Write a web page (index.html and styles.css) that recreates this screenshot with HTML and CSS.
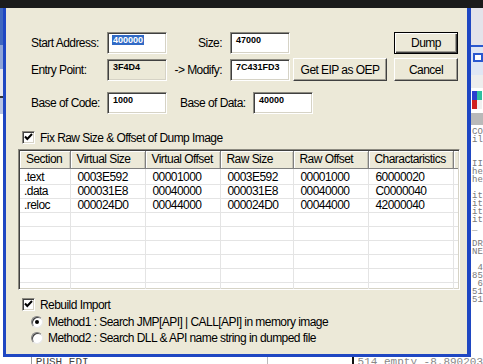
FILE: index.html
```html
<!DOCTYPE html>
<html>
<head>
<meta charset="utf-8">
<link rel="stylesheet" href="styles.css">
</head>
<body>
<div class="screen">
  <div class="topbar"></div>
  <div class="stage">
    <div class="left-strip">
      <div class="ls-a"></div>
      <div class="ls-b"></div>
      <div class="ls-c"></div>
      <div class="ls-d"></div>
      <div class="ls-e"></div>
    </div>
    <div class="dialog">
      <div class="row row1">
        <span class="lbl">Start Address:</span>
        <span class="field"><span class="sel">400000</span></span>
        <span class="lbl2">Size:</span>
        <span class="field">47000</span>
        <span class="btn btn-default btn-dump">Dump</span>
      </div>
      <div class="row row2">
        <span class="lbl">Entry Point:</span>
        <span class="field field-ro">3F4D4</span>
        <span class="lbl2">-&gt; Modify:</span>
        <span class="field">7C431FD3</span>
        <span class="btn btn-eip">Get EIP as OEP</span>
        <span class="btn btn-cancel">Cancel</span>
      </div>
      <div class="row row3">
        <span class="lbl">Base of Code:</span>
        <span class="field">1000</span>
        <span class="lbl3">Base of Data:</span>
        <span class="field">40000</span>
      </div>
      <div class="check-row fix-row">
        <span class="chk"><svg width="9" height="9" viewBox="0 0 9 9"><path d="M1 3.5 L3.3 6 L8 1" stroke="#000" stroke-width="2" fill="none"/></svg></span>
        <span class="chk-label">Fix Raw Size &amp; Offset of Dump Image</span>
      </div>
      <div class="list">
        <table>
          <colgroup>
            <col class="c-sec"><col class="c-vs"><col class="c-vo"><col class="c-rs"><col class="c-ro"><col class="c-ch"><col class="c-fill">
          </colgroup>
          <thead>
            <tr><th>Section</th><th>Virtual Size</th><th>Virtual Offset</th><th>Raw Size</th><th>Raw Offset</th><th>Charactaristics</th><th class="th-fill"></th></tr>
          </thead>
          <tbody>
            <tr><td>.text</td><td>0003E592</td><td>00001000</td><td>0003E592</td><td>00001000</td><td>60000020</td><td class="td-fill"></td></tr>
            <tr><td>.data</td><td>000031E8</td><td>00040000</td><td>000031E8</td><td>00040000</td><td>C0000040</td><td class="td-fill"></td></tr>
            <tr><td>.reloc</td><td>000024D0</td><td>00044000</td><td>000024D0</td><td>00044000</td><td>42000040</td><td class="td-fill"></td></tr>
            <tr><td></td><td></td><td></td><td></td><td></td><td></td><td class="td-fill"></td></tr>
            <tr><td></td><td></td><td></td><td></td><td></td><td></td><td class="td-fill"></td></tr>
            <tr><td></td><td></td><td></td><td></td><td></td><td></td><td class="td-fill"></td></tr>
            <tr><td></td><td></td><td></td><td></td><td></td><td></td><td class="td-fill"></td></tr>
            <tr><td></td><td></td><td></td><td></td><td></td><td></td><td class="td-fill"></td></tr>
            <tr><td></td><td></td><td></td><td></td><td></td><td></td><td class="td-fill"></td></tr>
          </tbody>
        </table>
      </div>
      <div class="check-row rebuild-row">
        <span class="chk"><svg width="9" height="9" viewBox="0 0 9 9"><path d="M1 3.5 L3.3 6 L8 1" stroke="#000" stroke-width="2" fill="none"/></svg></span>
        <span class="chk-label">Rebuild Import</span>
      </div>
      <div class="radio-row radio1">
        <span class="radio on"><span class="dot"></span></span>
        <span class="chk-label">Method1 : Search JMP[API] | CALL[API] in memory image</span>
      </div>
      <div class="radio-row radio2">
        <span class="radio"></span>
        <span class="chk-label">Method2 : Search DLL &amp; API name string in dumped file</span>
      </div>
    </div>
    <div class="right-strip">
      <div class="rs-a"></div>
      <div class="rs-b"><span class="rs-box"></span></div>
      <div class="rs-c"></div>
      <div class="rs-d"><span class="ic1"></span><span class="ic2"></span></div>
      <div class="rs-e"></div>
      <pre class="rs-text">CO
il


II
he
he

it
it
it
it
_

DR
NE

 4
85
 6
51
51</pre>
    </div>
  </div>
  <div class="below">
    <span class="bl-a"></span>
    <span class="bl-b">PUSH EDI</span>
    <span class="bl-c"></span>
    <span class="bl-d">514 empty -8.890203</span>
  </div>
</div>
</body>
</html>
```

FILE: styles.css
```css
* { box-sizing: border-box; }
html, body { margin: 0; padding: 0; }
body {
  width: 483px;
  height: 364px;
  overflow: hidden;
  background: #fff;
  font-family: "Liberation Sans", Arial, sans-serif;
  font-size: 12px;
  letter-spacing: -0.55px;
  color: #000;
}
.screen {
  width: 483px;
  height: 364px;
  display: flex;
  flex-direction: column;
  overflow: hidden;
}
.topbar { height: 8px; flex: none; background: #1b1b1b; }
.stage { display: flex; height: 349px; flex: none; }

/* left strip (background window) */
.left-strip { width: 3px; flex: none; display: flex; flex-direction: column; }
.ls-a { height: 37px; background: #3f67c0; }
.ls-b { height: 24px; background: #8ea4d8; }
.ls-c { height: 29px; background: #e6e6ee; border-bottom: 2px solid #333; }
.ls-d { height: 16px; background: #b8c4e4; }
.ls-e { flex: 1; background: #fff; }

/* dialog */
.dialog {
  width: 468px;
  flex: none;
  background: #ece9d8;
  border-left: 3px solid #1f47c2;
  border-right: 4px solid #1f47c2;
  border-bottom: 3px solid #1f47c2;
  padding-top: 24px;
  display: flex;
  flex-direction: column;
}
.row { display: flex; align-items: center; }
.row1 { height: 22px; }
.row2 { height: 23px; margin-top: 4px; }
.row3 { height: 22px; margin-top: 11px; }
.lbl { width: 101px; padding-left: 25px; white-space: nowrap; }
.lbl2 { width: 63px; text-align: right; padding-right: 8px; white-space: nowrap; }
.lbl3 { width: 73px; margin-left: 13px; white-space: nowrap; }
.field {
  width: 60px;
  height: 22px;
  background: #fff;
  border-style: solid;
  border-width: 1px;
  border-color: #8c8a80 #fff #fff #8c8a80;
  box-shadow: inset 1px 1px 0 #404040, inset -1px -1px 0 #d6d3c6;
  font-size: 9px;
  font-weight: bold;
  letter-spacing: 0;
  line-height: 10px;
  padding: 2px 0 0 5px;
  align-self: center;
}
.row2 .field { height: 22px; }
.field-ro { background: #ece9d8; }
.sel { background: #316ac5; color: #fff; padding: 0 1px; margin-left: -1px; }
.btn {
  height: 23px;
  display: flex;
  align-items: center;
  justify-content: center;
  background: #ece9d8;
  border-style: solid;
  border-width: 1px;
  border-color: #fff #404040 #404040 #fff;
  box-shadow: inset -1px -1px 0 #a09e94;
  white-space: nowrap;
}
.btn-dump { width: 64px; height: 22px; margin-left: 104px; border: 1px solid #000; box-shadow: inset 1px 1px 0 #fff, inset -1px -1px 0 #404040, inset -2px -2px 0 #a09e94; }
.btn-eip { width: 94px; margin-left: 3px; }
.btn-cancel { width: 64px; margin-left: 7px; }

/* checkboxes / radios */
.check-row, .radio-row { display: flex; align-items: center; white-space: nowrap; }
.fix-row { margin-top: 17px; height: 13px; padding-left: 16px; }
.rebuild-row { margin-top: 8px; height: 13px; padding-left: 16px; }
.chk {
  width: 13px;
  height: 13px;
  background: #fff;
  border-style: solid;
  border-width: 1px;
  border-color: #8c8a80 #fff #fff #8c8a80;
  box-shadow: inset 1px 1px 0 #404040, inset -1px -1px 0 #d6d3c6;
  display: flex;
  align-items: center;
  justify-content: center;
  flex: none;
}
.chk svg { display: block; }
.chk-label { margin-left: 5px; }
.radio-row { height: 12px; padding-left: 25px; }
.radio1 { margin-top: 5px; }
.radio2 { margin-top: 4px; }
.radio {
  width: 12px;
  height: 12px;
  border-radius: 50%;
  background: #fff;
  border: 1px solid;
  border-color: #808080 #e8e8e8 #e8e8e8 #808080;
  box-shadow: inset 1px 1px 0 #404040;
  display: flex;
  align-items: center;
  justify-content: center;
  flex: none;
}
.radio .dot { width: 4px; height: 4px; border-radius: 50%; background: #000; }

/* list view */
.list {
  margin-top: 5px;
  margin-left: 12px;
  width: 442px;
  height: 141px;
  background: #fff;
  border-style: solid;
  border-width: 1px;
  border-color: #8c8a80 #fff #fff #8c8a80;
  box-shadow: inset 1px 1px 0 #404040, inset -1px -1px 0 #d6d3c6;
  padding: 1px;
  overflow: hidden;
}
.list table { border-collapse: collapse; table-layout: fixed; width: 438px; }
.c-sec { width: 50px; }
.c-vs { width: 75px; }
.c-vo { width: 75px; }
.c-rs { width: 73px; }
.c-ro { width: 75px; }
.c-ch { width: 85px; }
.c-fill { width: 5px; }
.list th {
  height: 17px;
  padding: 0 0 0 6px;
  text-align: left;
  font-weight: normal;
  background: #ece9d8;
  border-right: 1px solid #808080;
  border-bottom: 1px solid #808080;
  box-shadow: inset 1px 1px 0 #fff, inset -1px 0 0 #c8c5b8;
  white-space: nowrap;
  overflow: hidden;
}
.list th.th-fill { border-right: none; box-shadow: inset 1px 1px 0 #fff; }
.list td {
  height: 14px;
  line-height: 13px;
  padding: 0 0 0 7px;
  border-right: 1px solid #e4e4e4;
  border-bottom: 1px solid #e4e4e4;
  white-space: nowrap;
  overflow: hidden;
}
.list td:first-child { padding-left: 4px; }
.list td.td-fill { border-right: none; }
.list tbody tr:first-child td { padding-top: 2px; height: 16px; }

/* right strip */
.right-strip { width: 12px; flex: none; display: flex; flex-direction: column; overflow: hidden; }
.rs-a { height: 37px; background: #e3e3ea; }
.rs-b { height: 30px; background: #dfe6f4; border-top: 2px solid #2a58cf; padding: 6px 0 0 2px; }
.rs-box { display: block; width: 10px; height: 9px; border: 2px solid #2a58cf; background: #fff; }
.rs-c { height: 13px; background: #ededed; }
.rs-d { height: 25px; background: #fff; display: flex; flex-direction: column; padding: 3px 0 0 1px; }
.ic1 { display: block; width: 10px; height: 9px; background: linear-gradient(90deg, #2a3fd0 50%, #2fc0a0 50%); }
.ic2 { display: block; width: 10px; height: 9px; background: linear-gradient(90deg, #d02020 50%, #f0f0f0 50%); }
.rs-e { height: 12px; background: #b9b9b9; }
.rs-text {
  margin: 3px 0 0 1px;
  font-family: "Liberation Mono", monospace;
  font-size: 9px;
  letter-spacing: 0;
  line-height: 8px;
  color: #7a7a7a;
}

/* below the dialog */
.below { height: 7px; flex: none; display: flex; overflow: hidden; background: #fff; }
.below span { display: block; height: 7px; }
.bl-a { width: 33px; border-right: 1px solid #999; }
.bl-b {
  width: 245px;
  padding-left: 4px;
  border-right: 1px solid #bbb;
  font-family: "Liberation Mono", monospace;
  font-size: 11px;
  letter-spacing: 0;
  line-height: 11px;
  color: #444;
}
.bl-c { width: 89px; border-right: 2px solid #111; }
.bl-d {
  padding-left: 4px;
  font-family: "Liberation Mono", monospace;
  font-size: 11px;
  letter-spacing: 0;
  line-height: 11px;
  color: #888;
  white-space: nowrap;
}
```
